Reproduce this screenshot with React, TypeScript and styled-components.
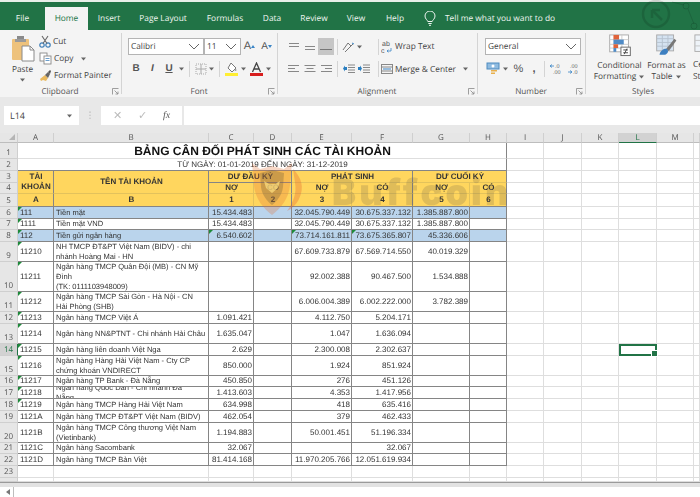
import React from "react";
import styled, { createGlobalStyle } from "styled-components";

const Global = createGlobalStyle`
  html, body { margin: 0; padding: 0; background: #fff; }
  * { box-sizing: border-box; }
`;

const UI = `"Open Sans", "Noto Sans", sans-serif`;
const CELL = `"Liberation Sans", Arial, sans-serif`;
const GREEN = "#217346";
const DARK = "#858585";
const LIGHT = "#dedede";

const Page = styled.div`
  position: relative;
  width: 700px;
  height: 497px;
  overflow: hidden;
  display: flex;
  flex-direction: column;
  font-family: ${UI};
  text-rendering: geometricPrecision;
  filter: blur(0.45px);
`;

/* ---------- tab bar ---------- */
const TabBar = styled.div`
  position: relative;
  height: 30px;
  flex: none;
  display: flex;
  align-items: flex-end;
  background: ${GREEN};
  border-top: 2px solid #e8efe9;
`;
const Tab = styled.div<{ $active?: boolean; $w: number }>`
  width: ${(p) => p.$w}px;
  height: ${(p) => (p.$active ? 23 : 28)}px;
  flex: none;
  display: flex;
  align-items: center;
  justify-content: center;
  font-size: 8.4px;
  padding-top: ${(p) => (p.$active ? 0 : 5)}px;
  color: ${(p) => (p.$active ? GREEN : "#eef5f0")};
  background: ${(p) => (p.$active ? "#f3f3f3" : "transparent")};
`;
const TellMe = styled.div`
  height: 28px;
  display: flex;
  align-items: center;
  gap: 9px;
  padding: 5px 0 0 8px;
  font-size: 8.4px;
  color: #eef5f0;
`;
const TabMark = styled.svg`
  position: absolute;
  right: 0;
  top: -2px;
`;

/* ---------- ribbon ---------- */
const Ribbon = styled.div`
  height: 67px;
  flex: none;
  display: flex;
  background: #f4f4f4;
  color: #444;
  font-size: 8.3px;
  overflow: hidden;
`;
const Group = styled.div<{ $w: number }>`
  width: ${(p) => p.$w}px;
  flex: none;
  display: flex;
  flex-direction: column;
  padding: 0 2px 0 0;
  position: relative;
  &::after {
    content: "";
    position: absolute;
    right: 0;
    top: 3px;
    bottom: 3px;
    width: 1px;
    background: #d4d4d4;
  }
`;
const GroupBody = styled.div<{ $l: number; $t?: number }>`
  flex: 1;
  min-height: 0;
  padding: ${(p) => p.$t ?? 8}px 0 0 ${(p) => p.$l}px;
  display: flex;
`;
const GroupFoot = styled.div`
  height: 15px;
  flex: none;
  display: grid;
  grid-template-columns: 14px 1fr 14px;
  align-items: center;
  text-align: center;
  font-size: 8.2px;
  color: #555;
  padding-top: 4px;
`;
const StylesFoot = styled(GroupFoot)`
  width: 114px;
`;
const Launcher = styled.svg`
  justify-self: end;
  margin-right: 1px;
`;
const PasteBtn = styled.div`
  width: 27px;
  flex: none;
  display: flex;
  flex-direction: column;
  align-items: center;
  font-size: 8.3px;
  line-height: 11px;
  margin-top: -3px;
  margin-right: 3px;
`;
const PasteLabel = styled.span`
  margin-top: 2px;
`;
const SmallCol = styled.div`
  display: flex;
  flex-direction: column;
  gap: 4px;
  margin-top: -3px;
`;
const SmallItem = styled.div`
  height: 13px;
  display: flex;
  align-items: center;
  gap: 2px;
  font-size: 8.3px;
  white-space: nowrap;
  color: #444;
`;
const Stack = styled.div<{ $gap?: number }>`
  display: flex;
  flex-direction: column;
  gap: ${(p) => p.$gap ?? 7}px;
`;
const Row = styled.div<{ $gap?: number; $h?: number }>`
  height: ${(p) => p.$h ?? 16}px;
  display: flex;
  align-items: center;
  gap: ${(p) => p.$gap ?? 0}px;
`;
const Combo = styled.div<{ $w: number }>`
  width: ${(p) => p.$w}px;
  height: 17px;
  flex: none;
  display: flex;
  align-items: center;
  justify-content: space-between;
  background: #fff;
  border: 1px solid #b4b4b4;
  padding: 0 3px 0 2px;
  font-size: 8.3px;
  color: #444;
`;
const IconCell = styled.div<{ $w?: number; $on?: boolean }>`
  width: ${(p) => p.$w ?? 16}px;
  height: 17px;
  flex: none;
  display: flex;
  align-items: center;
  justify-content: center;
  background: ${(p) => (p.$on ? "#c6c6c6" : "transparent")};
`;
const Letter = styled.span<{ $b?: boolean; $i?: boolean; $u?: boolean; $s?: number }>`
  font-family: ${CELL};
  font-size: ${(p) => p.$s ?? 10}px;
  font-weight: ${(p) => (p.$b ? 700 : 400)};
  font-style: ${(p) => (p.$i ? "italic" : "normal")};
  text-decoration: ${(p) => (p.$u ? "underline" : "none")};
  color: #555;
`;
const Sep = styled.div<{ $h?: number; $l?: number; $r?: number }>`
  width: 1px;
  height: ${(p) => p.$h ?? 16}px;
  flex: none;
  margin: 0 ${(p) => p.$r ?? 3}px 0 ${(p) => p.$l ?? 3}px;
  background: #d4d4d4;
`;
const InlineLabel = styled.span`
  margin-left: 2px;
  font-size: 8.3px;
  white-space: nowrap;
`;
const Big = styled.div<{ $w: number; $start?: boolean; $ml?: number }>`
  width: ${(p) => p.$w}px;
  flex: none;
  display: flex;
  flex-direction: column;
  align-items: ${(p) => (p.$start ? "flex-start" : "center")};
  margin-left: ${(p) => p.$ml ?? 0}px;
  text-align: center;
  font-size: 8.3px;
  line-height: 11.5px;
  white-space: nowrap;
  margin-top: -4px;
  & > svg { margin-bottom: 3px; }
`;
const CaretSlot = styled.span<{ $ml?: number; $mt?: number }>`
  margin-left: ${(p) => p.$ml ?? 0}px;
  margin-top: ${(p) => p.$mt ?? 0}px;
  display: inline-flex;
  align-items: center;
  line-height: 4px;
`;
const Caret = () => (
  <svg width="7" height="4" viewBox="0 0 7 4" style={{ flex: "none" }}>
    <path d="M1 0.5h5L3.5 3.5z" fill="#666" />
  </svg>
);
const Chevron = () => (
  <svg width="12" height="7" viewBox="0 0 12 7">
    <path d="M1 1l5 5 5-5" fill="none" stroke="#666" strokeWidth="1" />
  </svg>
);
const Lines = ({ w = [10, 10, 10], a = "c", c = "#888" }: { w?: number[]; a?: string; c?: string }) => (
  <svg width="12" height="10" viewBox="0 0 12 10">
    {w.map((x, i) => {
      const s = a === "c" ? (12 - x) / 2 : a === "r" ? 12 - x : 0;
      return <rect key={i} x={s} y={1 + i * 3} width={x} height="1" fill={c} />;
    })}
  </svg>
);
const Indent = ({ flip }: { flip?: boolean }) => (
  <svg width="12" height="10" viewBox="0 0 12 10">
    <path d="M5 1h7M5 3.5h7M5 6h7M5 8.5h7" stroke="#888" strokeWidth="1" />
    <path d={flip ? "M0 3h2V1.5L4 4.5 2 7.5V6H0z" : "M4 3H2V1.5L0 4.5l2 3V6h2z"} fill="#2a7fc1" />
  </svg>
);
const LaunchIcon = () => (
  <Launcher width="7" height="7" viewBox="0 0 7 7">
    <path d="M0.5 6.5v-6h6M2.5 2.5l3.5 3.5M6 3.5V6H3.5" fill="none" stroke="#888" strokeWidth="0.8" />
  </Launcher>
);

/* ---------- formula row ---------- */
const FormulaRow = styled.div`
  height: 36px;
  flex: none;
  display: flex;
  align-items: flex-start;
  padding: 9px 0 0 4px;
  background: #e8e8e8;
`;
const NameBox = styled.div`
  width: 75px;
  height: 19px;
  flex: none;
  display: flex;
  align-items: center;
  justify-content: space-between;
  padding: 0 6px 0 6px;
  background: #fff;
  font-size: 9px;
  color: #444;
`;
const Grip = styled.div`
  width: 22px;
  flex: none;
  height: 19px;
  color: #aaa;
  font-size: 9px;
  line-height: 17px;
  text-align: center;
`;
const FxBox = styled.div`
  width: 81px;
  height: 19px;
  flex: none;
  display: flex;
  align-items: center;
  justify-content: space-around;
  padding: 0 4px;
  background: #fff;
  color: #bbb;
  font-size: 11px;
`;
const Fx = styled.span`
  font-family: "Liberation Serif", serif;
  font-style: italic;
  font-size: 10px;
  color: #555;
`;
const FormulaInput = styled.div`
  flex: 1;
  height: 19px;
  margin-left: 2px;
  background: #fff;
`;

/* ---------- sheet ---------- */
const COLS = [18, 36, 155, 45, 38, 60, 61, 57, 37, 37, 38, 37, 38, 37, 6];
const HEIGHTS = [10, 16, 12, 12, 11, 13, 12, 11, 12, 20, 30, 20, 12, 20, 12, 20, 11, 12, 12, 12, 20, 11, 12, 12, 4];

const Sheet = styled.div`
  position: relative;
  height: 349px;
  flex: none;
  display: grid;
  grid-template-columns: ${COLS.map((c) => `${c}px`).join(" ")};
  grid-template-rows: ${HEIGHTS.map((c) => `${c}px`).join(" ")};
  overflow: hidden;
  background: #fff;
  font-family: ${CELL};
  font-size: 8px;
  color: #333;
`;
const Corner = styled.div`
  background: #e6e6e6;
  border-right: 1px solid #cfcfcf;
  border-bottom: 1px solid #bdbdbd;
  position: relative;
  &::after {
    content: "";
    position: absolute;
    right: 2px;
    bottom: 2px;
    border-style: solid;
    border-width: 0 0 6px 6px;
    border-color: transparent transparent #b5b5b5 transparent;
  }
`;
const ColHead = styled.div<{ $on?: boolean }>`
  display: flex;
  align-items: center;
  justify-content: center;
  font-size: 8px;
  font-family: ${UI};
  color: ${(p) => (p.$on ? GREEN : "#555")};
  background: ${(p) => (p.$on ? "#d2d2d2" : "#e6e6e6")};
  border-right: 1px solid #cfcfcf;
  border-bottom: 1px solid ${(p) => (p.$on ? GREEN : "#bdbdbd")};
`;
const RowHead = styled.div<{ $on?: boolean }>`
  display: flex;
  align-items: flex-end;
  justify-content: center;
  overflow: hidden;
  line-height: 11px;
  font-size: 8px;
  font-family: ${UI};
  color: ${(p) => (p.$on ? GREEN : "#555")};
  background: ${(p) => (p.$on ? "#d2d2d2" : "#e6e6e6")};
  border-right: 1px solid ${(p) => (p.$on ? GREEN : "#cfcfcf")};
  border-bottom: 1px solid #cfcfcf;
`;
const Cell = styled.div<{
  $span?: number;
  $rows?: number;
  $bg?: string;
  $r?: string;
  $b?: string;
  $align?: string;
  $bold?: boolean;
  $top?: boolean;
  $flag?: boolean;
}>`
  position: relative;
  grid-column: span ${(p) => p.$span ?? 1};
  grid-row: span ${(p) => p.$rows ?? 1};
  display: flex;
  align-items: ${(p) => (p.$top ? "flex-start" : "center")};
  justify-content: ${(p) => p.$align ?? "flex-start"};
  text-align: ${(p) => (p.$align === "center" ? "center" : "left")};
  overflow: hidden;
  white-space: nowrap;
  padding: 0 1px 0 2px;
  line-height: 10px;
  font-weight: ${(p) => (p.$bold ? 700 : 400)};
  background: ${(p) => p.$bg ?? "transparent"};
  border-right: 1px solid ${(p) => p.$r ?? DARK};
  border-bottom: 1px solid ${(p) => p.$b ?? DARK};
  ${(p) =>
    p.$flag
      ? `&::before {
    content: "";
    position: absolute;
    left: 0;
    top: 0;
    border-style: solid;
    border-width: 4px 4px 0 0;
    border-color: #1e8a3a transparent transparent transparent;
  }`
      : ""}
`;
const NameText = styled.div`
  font-size: 7.55px;
`;
const Title = styled(Cell)`
  font-size: 12px;
  line-height: 15px;
  font-weight: 700;
  color: #111;
  justify-content: center;
  padding-top: 2px;
`;
const SelectedCell = styled.div`
  position: relative;
  border: 2px solid ${GREEN};
  &::after {
    content: "";
    position: absolute;
    right: -3px;
    bottom: -3px;
    width: 5px;
    height: 5px;
    background: ${GREEN};
    border: 1px solid #fff;
  }
`;
const Blank = styled.div`
  border-right: 1px solid ${LIGHT};
  border-bottom: 1px solid ${LIGHT};
`;
const WaterLogo = styled.svg`
  position: absolute;
  left: 249px;
  top: 24px;
  pointer-events: none;
`;
const WaterText = styled.div`
  position: absolute;
  left: 332px;
  top: 36px;
  font-family: Inter, "Open Sans", sans-serif;
  font-size: 36px;
  line-height: 46px;
  font-weight: 900;
  letter-spacing: 3.2px;
  color: rgba(95, 85, 70, 0.2);
  pointer-events: none;
`;

/* ---------- bottom ---------- */
const ScrollBand = styled.div`
  height: 5px;
  flex: none;
  background: #e2e2e2;
  border-top: 1px solid #9a9a9a;
`;
const BottomStrip = styled.div`
  flex: 1;
  display: flex;
  padding-left: 3px;
  background: #fff;
`;
const ArrowBtn = styled.div`
  width: 11px;
  height: 10px;
  display: flex;
  align-items: center;
  justify-content: center;
  border-right: 1px solid #bdbdbd;
  color: #777;
`;

/* ---------- data ---------- */
type Data = {
  a: string;
  name: string[];
  c?: string;
  e?: string;
  f?: string;
  g?: string;
  blue?: boolean;
  flagA?: boolean;
  flags?: string;
};
const DATA: Data[] = [
  { a: "111", name: ["Tiền mặt"], c: "15.434.483", e: "32.045.790.449", f: "30.675.337.132", g: "1.385.887.800", blue: true, flagA: true },
  { a: "1111", name: ["Tiền mặt VND"], c: "15.434.483", e: "32.045.790.449", f: "30.675.337.132", g: "1.385.887.800", flagA: true },
  { a: "112", name: ["Tiền gửi ngân hàng"], c: "6.540.602", e: "73.714.161.811", f: "73.675.365.807", g: "45.336.606", blue: true, flagA: true, flags: "cef" },
  { a: "11210", name: ["NH TMCP ĐT&PT Việt Nam (BIDV) - chi", "nhánh Hoàng Mai - HN"], e: "67.609.733.879", f: "67.569.714.550", g: "40.019.329", flagA: true },
  { a: "11211", name: ["Ngân hàng TMCP Quân Đội (MB) - CN Mỹ", "Đình", "(TK: 0111103948009)"], e: "92.002.388", f: "90.467.500", g: "1.534.888", flagA: true },
  { a: "11212", name: ["Ngân hàng TMCP Sài Gòn - Hà Nội - CN", "Hải Phòng (SHB)"], e: "6.006.004.389", f: "6.002.222.000", g: "3.782.389", flagA: true },
  { a: "11213", name: ["Ngân hàng TMCP Việt Á"], c: "1.091.421", e: "4.112.750", f: "5.204.171", flagA: true },
  { a: "11214", name: ["Ngân hàng NN&PTNT - Chi nhánh Hải Châu"], c: "1.635.047", e: "1.047", f: "1.636.094", flagA: true },
  { a: "11215", name: ["Ngân hàng liên doanh Việt Nga"], c: "2.629", e: "2.300.008", f: "2.302.637", flagA: true },
  { a: "11216", name: ["Ngân hàng Hàng Hải Việt Nam - Cty CP", "chứng khoán VNDIRECT"], c: "850.000", e: "1.924", f: "851.924", flagA: true },
  { a: "11217", name: ["Ngân hàng TP Bank - Đà Nẵng"], c: "450.850", e: "276", f: "451.126", flagA: true },
  { a: "11218", name: ["Ngân hàng Quốc Dân - Chi nhánh Đà", "Nẵng"], c: "1.413.603", e: "4.353", f: "1.417.956", flagA: true },
  { a: "11219", name: ["Ngân hàng TMCP Hàng Hải Việt Nam"], c: "634.998", e: "418", f: "635.416", flagA: true },
  { a: "1121A", name: ["Ngân hàng TMCP ĐT&PT Việt Nam (BIDV)"], c: "462.054", e: "379", f: "462.433" },
  { a: "1121B", name: ["Ngân hàng TMCP Công thương Việt Nam", "(Vietinbank)"], c: "1.194.883", e: "50.001.451", f: "51.196.334" },
  { a: "1121C", name: ["Ngân hàng Sacombank"], c: "32.067", f: "32.067" },
  { a: "1121D", name: ["Ngân hàng TMCP Bản Việt"], c: "81.414.168", e: "11.970.205.766", f: "12.051.619.934" },
];

const YEL = "#ffd65e";
const YB = "#e3c25c";
const BLUE = "#bad4ec";
const right = "flex-end";

const Blanks = ({ row }: { row: number }) => (
  <>
    {["I", "J", "K", "L", "M", "N"].map((c) =>
      c === "L" && row === 14 ? <SelectedCell key={c} /> : <Blank key={c} />
    )}
  </>
);

const DataRow = ({ d, n }: { d: Data; n: number }) => {
  const bg = d.blue ? BLUE : undefined;
  const flag = (k: string) => (d.flags ?? "").includes(k);
  return (
    <>
      <RowHead $on={n === 14}>{n}</RowHead>
      <Cell $bg={bg} $flag={d.flagA}>{d.a}</Cell>
      <Cell $bg={bg} $top={d.name.length === 3}>
        <NameText>
          {d.name.map((l) => (
            <div key={l}>{l}</div>
          ))}
        </NameText>
      </Cell>
      <Cell $bg={bg} $align={right} $flag={flag("c")}>{d.c}</Cell>
      <Cell $bg={bg} />
      <Cell $bg={bg} $align={right} $flag={flag("e")}>{d.e}</Cell>
      <Cell $bg={bg} $align={right} $flag={flag("f")}>{d.f}</Cell>
      <Cell $bg={bg} $align={right}>{d.g}</Cell>
      <Cell $bg={bg} />
      <Blanks row={n} />
    </>
  );
};

const HeaderCell = (p: React.ComponentProps<typeof Cell>) => (
  <Cell $bg={YEL} $align="center" $bold $b={YB} {...p} />
);

const TABS: [string, number, boolean?][] = [
  ["File", 45],
  ["Home", 43, true],
  ["Insert", 42],
  ["Page Layout", 66],
  ["Formulas", 58],
  ["Data", 36],
  ["Review", 48],
  ["View", 36],
  ["Help", 42],
];

export default function App() {
  return (
    <Page>
      <Global />
      <TabBar>
        {TABS.map(([t, w, a]) => (
          <Tab key={t} $w={w} $active={a}>{t}</Tab>
        ))}
        <TellMe>
          <svg width="12" height="15" viewBox="0 0 12 15" fill="none" stroke="#eef5f0" strokeWidth="1">
            <path d="M3.8 10.5C3.5 9 1 8 1 5a5 5 0 0 1 10 0c0 3-2.5 4-2.8 5.5z" />
            <path d="M4.3 12.5h3.4M5 14.3h2" />
          </svg>
          Tell me what you want to do
        </TellMe>
        <TabMark width="60" height="30" viewBox="0 0 60 30" fill="none" stroke="rgba(0,0,0,0.13)">
          <circle cx="16" cy="14" r="13" strokeWidth="2.5" />
          <path d="M12 10h8M12 10v8M12 10l10 10" strokeWidth="2.5" />
          <circle cx="46" cy="6" r="3" strokeWidth="1" />
          <circle cx="54" cy="26" r="3" strokeWidth="1" />
          <path d="M32 2l12 3M48 9l6 15" strokeWidth="1" />
        </TabMark>
      </TabBar>

      <Ribbon>
        <Group $w={122}>
          <GroupBody $l={9}>
            <PasteBtn>
              <svg width="24" height="27" viewBox="0 0 24 27">
                <rect x="1" y="4" width="17" height="21" rx="1" fill="#eec27c" />
                <rect x="6" y="1" width="7" height="5" fill="#8a8a8a" />
                <rect x="4" y="4" width="11" height="3" fill="#9a9a9a" />
                <path d="M11 11h8l4 4v11H11z" fill="#fff" stroke="#8a8a8a" />
                <path d="M19 11v4h4" fill="none" stroke="#8a8a8a" />
              </svg>
              <PasteLabel>Paste</PasteLabel>
              <CaretSlot $mt={3}><Caret /></CaretSlot>
            </PasteBtn>
            <SmallCol>
              <SmallItem>
                <svg width="12" height="13" viewBox="0 0 12 13" fill="none">
                  <circle cx="3" cy="10" r="2.2" stroke="#3f7fb8" strokeWidth="1.2" />
                  <circle cx="9" cy="10" r="2.2" stroke="#3f7fb8" strokeWidth="1.2" />
                  <path d="M4 8.5L9 1M8 8.5L3 1" stroke="#666" strokeWidth="1.1" />
                </svg>
                Cut
              </SmallItem>
              <SmallItem>
                <svg width="13" height="13" viewBox="0 0 13 13" fill="#fff" stroke="#888" strokeWidth="0.9">
                  <rect x="1" y="1" width="7" height="8" />
                  <rect x="5" y="4" width="7" height="8" />
                  <path d="M6.5 6.5h4M6.5 8.5h4" stroke="#5a93c6" />
                </svg>
                Copy
                <CaretSlot $ml={5}><Caret /></CaretSlot>
              </SmallItem>
              <SmallItem>
                <svg width="13" height="13" viewBox="0 0 13 13">
                  <path d="M1 10l5-4 3 3-2 3-3-1-2 1z" fill="#e9b95f" />
                  <path d="M6 6l3-3 2 2-2 4z" fill="#666" />
                  <path d="M9 3l2-2 1 1-1 3z" fill="#555" />
                </svg>
                Format Painter
              </SmallItem>
            </SmallCol>
          </GroupBody>
          <GroupFoot><span /><span>Clipboard</span><LaunchIcon /></GroupFoot>
        </Group>

        <Group $w={156}>
          <GroupBody $l={6}>
            <Stack>
              <Row>
                <Combo $w={76}>Calibri<Chevron /></Combo>
                <Combo $w={37}>11<Chevron /></Combo>
                <IconCell $w={17}><Letter $s={11}>A</Letter><svg width="4" height="3"><path d="M0 3l2-3 2 3z" fill="#3a85c6" /></svg></IconCell>
                <IconCell $w={17}><Letter $s={10}>A</Letter><svg width="4" height="3"><path d="M0 0l2 3 2-3z" fill="#3a85c6" /></svg></IconCell>
              </Row>
              <Row $h={15}>
                <IconCell $w={16}><Letter $b>B</Letter></IconCell>
                <IconCell $w={17}><Letter $i $b>I</Letter></IconCell>
                <IconCell $w={16}><Letter $u $b>U</Letter></IconCell>
                <IconCell $w={8}><Caret /></IconCell>
                <Sep $l={4} $r={4} />
                <IconCell $w={13}>
                  <svg width="12" height="12" viewBox="0 0 12 12" fill="none" stroke="#aaa" strokeWidth="1">
                    <rect x="1" y="1" width="10" height="10" strokeDasharray="1 1" />
                    <path d="M6 1v10M1 6h10" />
                  </svg>
                </IconCell>
                <IconCell $w={8}><Caret /></IconCell>
                <Sep $l={4} $r={4} />
                <IconCell $w={15}>
                  <svg width="13" height="14" viewBox="0 0 13 14">
                    <path d="M6 1l5 5-4 4-4-4z" fill="#fff" stroke="#777" />
                    <circle cx="10.5" cy="8" r="1" fill="#999" />
                    <rect x="0" y="11" width="13" height="3" fill="#ffee33" />
                  </svg>
                </IconCell>
                <IconCell $w={9}><Caret /></IconCell>
                <IconCell $w={16}>
                  <svg width="13" height="14" viewBox="0 0 13 14">
                    <path d="M2.5 10L6.5 1l4 9M4 7h5" fill="none" stroke="#444" strokeWidth="1.3" />
                    <rect x="0" y="11" width="13" height="3" fill="#d81e1e" />
                  </svg>
                </IconCell>
                <IconCell $w={9}><Caret /></IconCell>
              </Row>
            </Stack>
          </GroupBody>
          <GroupFoot><span /><span>Font</span><LaunchIcon /></GroupFoot>
        </Group>

        <Group $w={200}>
          <GroupBody $l={8}>
            <Stack $gap={6}>
              <Row $h={17}>
                <IconCell><Lines w={[10, 10]} /></IconCell>
                <IconCell><Lines w={[0, 10, 10]} /></IconCell>
                <IconCell $on><Lines w={[0, 0, 12]} c="#777" /></IconCell>
                <Sep />
                <IconCell $w={14}>
                  <svg width="13" height="12" viewBox="0 0 13 12" fill="none" stroke="#777" strokeWidth="1">
                    <path d="M1 9L6 2l3 3M3 11l8-8" />
                    <path d="M10 2l2 1" stroke="#3a85c6" />
                  </svg>
                </IconCell>
                <IconCell $w={8}><Caret /></IconCell>
                <Sep $l={15} $r={2} />
                <IconCell $w={12}>
                  <svg width="12" height="14" viewBox="0 0 12 14">
                    <text x="1" y="6" fontSize="7" fill="#555" fontFamily="Liberation Sans">ab</text>
                    <text x="0" y="13" fontSize="7" fill="#555" fontFamily="Liberation Sans">c</text>
                    <path d="M10 8v3H6M6 11l1.5-1.2M6 11l1.5 1.2" fill="none" stroke="#3a85c6" strokeWidth="0.8" />
                  </svg>
                </IconCell>
                <InlineLabel>Wrap Text</InlineLabel>
              </Row>
              <Row $h={16}>
                <IconCell><Lines w={[11, 7, 11]} a="l" /></IconCell>
                <IconCell><Lines w={[11, 7, 11]} /></IconCell>
                <IconCell><Lines w={[11, 7, 11]} a="r" /></IconCell>
                <Sep />
                <IconCell $w={15}><Indent /></IconCell>
                <IconCell $w={16}><Indent flip /></IconCell>
                <Sep $l={6} $r={2} />
                <IconCell $w={12}>
                  <svg width="12" height="12" viewBox="0 0 12 12" fill="none" stroke="#888">
                    <rect x="0.5" y="1.5" width="11" height="9" />
                    <path d="M0.5 4h11M0.5 8h11" />
                    <path d="M2 6h8" stroke="#3a85c6" />
                  </svg>
                </IconCell>
                <InlineLabel>Merge &amp; Center</InlineLabel>
                <CaretSlot $ml={6}><Caret /></CaretSlot>
              </Row>
            </Stack>
          </GroupBody>
          <GroupFoot><span /><span>Alignment</span><LaunchIcon /></GroupFoot>
        </Group>

        <Group $w={108}>
          <GroupBody $l={7}>
            <Stack>
              <Row>
                <Combo $w={96}>General<Chevron /></Combo>
              </Row>
              <Row $h={15}>
                <IconCell $w={15}>
                  <svg width="14" height="13" viewBox="0 0 14 13">
                    <rect x="1" y="1" width="12" height="6" fill="#8fbbe0" stroke="#4f8bbf" />
                    <circle cx="7" cy="4" r="1.5" fill="#fff" />
                    <rect x="5" y="8" width="6" height="1.5" fill="#e8b04c" />
                    <rect x="5" y="10.5" width="4" height="1.5" fill="#e8b04c" />
                  </svg>
                </IconCell>
                <IconCell $w={10}><Caret /></IconCell>
                <IconCell $w={17}><Letter $s={11}>%</Letter></IconCell>
                <IconCell $w={14}><Letter $s={11} $b>,</Letter></IconCell>
                <Sep $l={3} $r={3} />
                <IconCell $w={17}>
                  <svg width="13" height="12" viewBox="0 0 13 12">
                    <text x="5" y="5" fontSize="5.5" fill="#666" fontFamily="Liberation Sans">.0</text>
                    <text x="3" y="11" fontSize="5.5" fill="#666" fontFamily="Liberation Sans">.00</text>
                    <path d="M0 3h4M0 3l2-1.5M0 3l2 1.5" stroke="#3a85c6" strokeWidth="0.8" fill="none" />
                  </svg>
                </IconCell>
                <IconCell $w={17}>
                  <svg width="13" height="12" viewBox="0 0 13 12">
                    <text x="3" y="5" fontSize="5.5" fill="#666" fontFamily="Liberation Sans">.00</text>
                    <text x="6" y="11" fontSize="5.5" fill="#666" fontFamily="Liberation Sans">.0</text>
                    <path d="M1 9h4M5 9L3 7.5M5 9l-2 1.5" stroke="#3a85c6" strokeWidth="0.8" fill="none" />
                  </svg>
                </IconCell>
              </Row>
            </Stack>
          </GroupBody>
          <GroupFoot><span /><span>Number</span><LaunchIcon /></GroupFoot>
        </Group>

        <Group $w={120}>
          <GroupBody $l={7}>
            <Big $w={53}>
              <svg width="24" height="24" viewBox="0 0 24 24">
                <rect x="1" y="1" width="20" height="18" fill="#fff" stroke="#aaa" />
                <path d="M1 6h20M1 11h20M1 15h20M7 1v18M14 1v18" stroke="#ccc" />
                <rect x="5" y="1" width="6" height="5" fill="#e0633a" />
                <rect x="5" y="6" width="11" height="5" fill="#4f8bc6" />
                <rect x="5" y="11" width="5" height="4" fill="#e0633a" />
                <rect x="5" y="15" width="3" height="4" fill="#4f8bc6" />
                <rect x="13" y="14" width="10" height="9" fill="#fff" stroke="#666" />
                <path d="M15.5 17h5M15.5 20h5M19.5 15.5l-3 6" stroke="#444" fill="none" />
              </svg>
              <span>Conditional</span>
              <Row $gap={2} $h={11}>Formatting <Caret /></Row>
            </Big>
            <Big $w={41}>
              <svg width="24" height="24" viewBox="0 0 24 24">
                <rect x="1" y="1" width="18" height="17" fill="#d5e3f1" stroke="#aaa" />
                <path d="M1 5h18M1 9h18M1 13h18M7 1v17M13 1v17" stroke="#b5c2cf" />
                <path d="M11 16l9-11 2 2-8 11z" fill="#777" />
                <path d="M4 22c1-5 6-7 8-6 2 2 1 5-2 6z" fill="#3d7fc0" />
              </svg>
              <span>Format as</span>
              <Row $gap={2} $h={11}>Table <Caret /></Row>
            </Big>
            <Big $w={26} $start $ml={6}>
              <svg width="24" height="24" viewBox="0 0 24 24">
                <rect x="1" y="1" width="22" height="18" fill="#eef3f8" stroke="#aaa" />
                <path d="M1 7h22M1 13h22" stroke="#c5c5c5" />
                <rect x="8" y="13" width="15" height="7" fill="#5a9ad6" />
              </svg>
              <span>Cell</span>
              <span>Styles</span>
            </Big>
          </GroupBody>
          <StylesFoot><span /><span>Styles</span><span /></StylesFoot>
        </Group>
      </Ribbon>

      <FormulaRow>
        <NameBox>L14<Caret /></NameBox>
        <Grip>⋮</Grip>
        <FxBox>
          <span>✕</span>
          <span>✓</span>
          <Fx>fx</Fx>
        </FxBox>
        <FormulaInput />
      </FormulaRow>

      <Sheet>
        <Corner />
        {["A", "B", "C", "D", "E", "F", "G", "H", "I", "J", "K", "L", "M", ""].map((c, i) => (
          <ColHead key={i} $on={c === "L"}>{c}</ColHead>
        ))}

        <RowHead>1</RowHead>
        <Title $span={8} $r={DARK} $b={LIGHT}>BẢNG CÂN ĐỐI PHÁT SINH CÁC TÀI KHOẢN</Title>
        <Blanks row={1} />
        <RowHead>2</RowHead>
        <Cell $span={8} $align="center" $b={DARK}>TỪ NGÀY: 01-01-2019 ĐẾN NGÀY: 31-12-2019</Cell>
        <Blanks row={2} />

        <RowHead>3</RowHead>
        <HeaderCell $rows={2}><div>TÀI<br />KHOẢN</div></HeaderCell>
        <HeaderCell $rows={2}>TÊN TÀI KHOẢN</HeaderCell>
        <HeaderCell $span={2} $b={DARK}>DƯ ĐẦU KỲ</HeaderCell>
        <HeaderCell $span={2}>PHÁT SINH</HeaderCell>
        <HeaderCell $span={2}>DƯ CUỐI KỲ</HeaderCell>
        <Blanks row={3} />

        <RowHead>4</RowHead>
        <HeaderCell $r={YB}>NỢ</HeaderCell>
        <HeaderCell>CÓ</HeaderCell>
        <HeaderCell $r={YB}>NỢ</HeaderCell>
        <HeaderCell>CÓ</HeaderCell>
        <HeaderCell $r={YB}>NỢ</HeaderCell>
        <HeaderCell>CÓ</HeaderCell>
        <Blanks row={4} />

        <RowHead>5</RowHead>
        {["A", "B", "1", "2", "3", "4", "5", "6"].map((c, i) => (
          <HeaderCell key={c} $b={DARK} $r={i === 2 || i === 4 || i === 6 ? YB : DARK}>{c}</HeaderCell>
        ))}
        <Blanks row={5} />

        {DATA.map((d, i) => (
          <DataRow key={d.a} d={d} n={i + 6} />
        ))}

        <RowHead>23</RowHead>
        {Array.from({ length: 14 }, (_, i) => <Blank key={i} />)}
        <RowHead />
        {Array.from({ length: 14 }, (_, i) => <Blank key={i} />)}

        <WaterLogo width="62" height="64" viewBox="0 0 62 64">
          <path d="M3 6l8 6 12-3 12 3 8-6-2 22c-1 14-10 24-18 30C15 52 6 42 5 28z" fill="rgba(226,110,50,0.28)" />
          <path d="M11 16l12-3 12 3-1 14c-1 8-6 14-11 18-5-4-10-10-11-18z" fill="rgba(120,100,60,0.35)" />
          <path d="M15 24l5 3h6l5-3-2 7-6 5-6-5z" fill="rgba(255,225,130,0.7)" />
          <path d="M44 12c8 8 12 18 6 30-3 6-8 10-12 12 6-8 10-18 8-28z" fill="rgba(226,90,40,0.3)" />
        </WaterLogo>
        <WaterText>Buffcoin</WaterText>
      </Sheet>

      <ScrollBand />
      <BottomStrip>
        <ArrowBtn>
          <svg width="5" height="6" viewBox="0 0 5 6"><path d="M4 0v6L0 3z" fill="#777" /></svg>
        </ArrowBtn>
      </BottomStrip>
    </Page>
  );
}
